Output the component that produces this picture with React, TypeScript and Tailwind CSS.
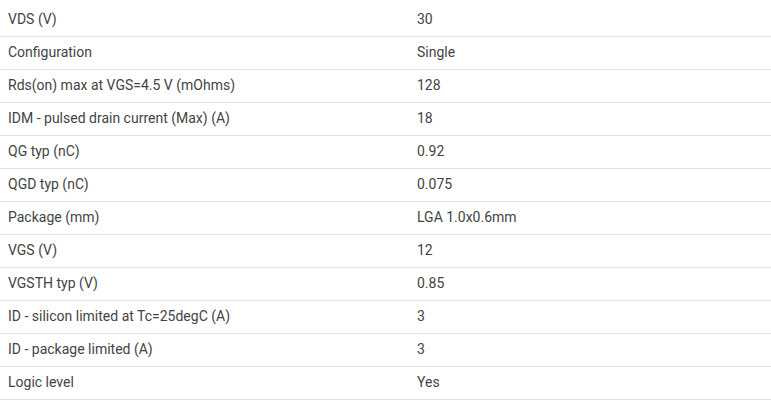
const specs: [string, string][] = [
  ['VDS (V)', '30'],
  ['Configuration', 'Single'],
  ['Rds(on) max at VGS=4.5 V (mOhms)', '128'],
  ['IDM - pulsed drain current (Max) (A)', '18'],
  ['QG typ (nC)', '0.92'],
  ['QGD typ (nC)', '0.075'],
  ['Package (mm)', 'LGA 1.0x0.6mm'],
  ['VGS (V)', '12'],
  ['VGSTH typ (V)', '0.85'],
  ['ID - silicon limited at Tc=25degC (A)', '3'],
  ['ID - package limited (A)', '3'],
  ['Logic level', 'Yes'],
];

export default function App() {
  return (
    <div className="w-[771px] bg-white pt-[3px] font-['Roboto',sans-serif] text-[14px] text-[#444]">
      <table className="w-full border-collapse">
        <tbody>
          {specs.map(([label, value]) => (
            <tr key={label} className="h-[33px] border-b border-[#e3e3e3]">
              <td className="w-[409px] px-2 align-middle">{label}</td>
              <td className="px-2 align-middle">{value}</td>
            </tr>
          ))}
        </tbody>
      </table>
    </div>
  );
}
